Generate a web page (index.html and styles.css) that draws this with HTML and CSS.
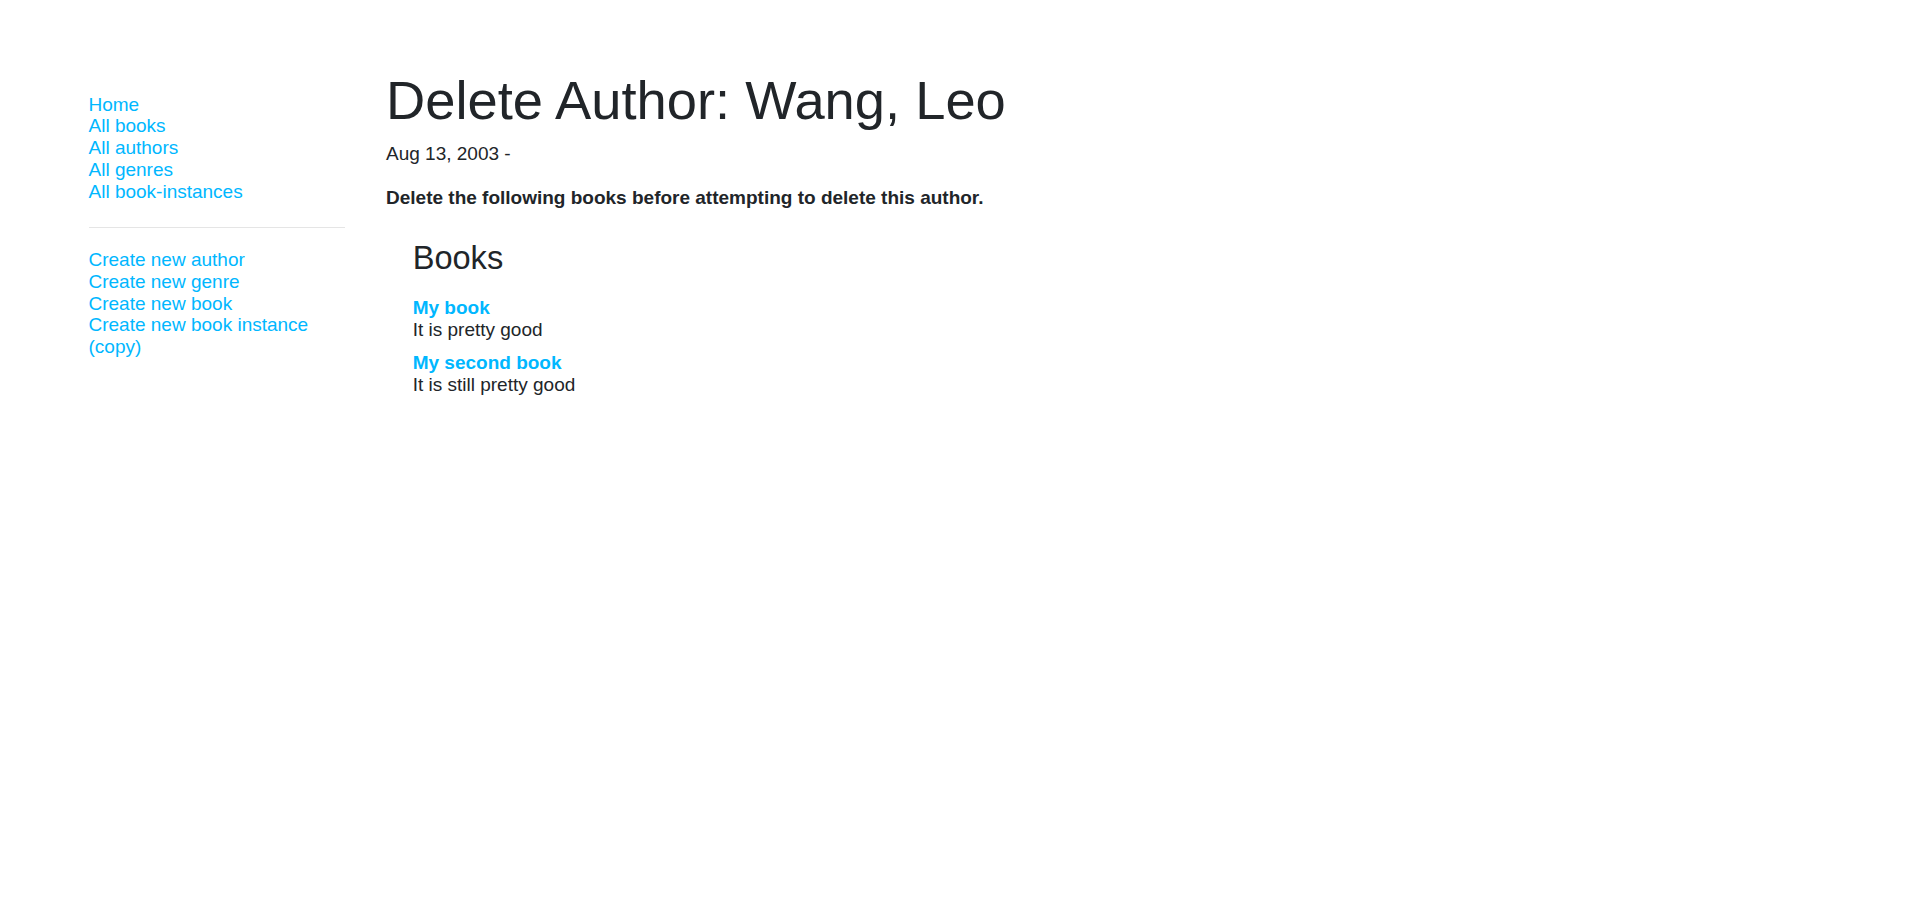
FILE: index.html
```html
<!DOCTYPE html>
<html lang="en">
<head>
<meta charset="utf-8">
<title>Delete Author</title>
<link rel="stylesheet" href="styles.css">
</head>
<body>
  <div class="layout">
    <div class="sidebar">
      <ul class="sidebar-nav">
        <li><a href="#">Home</a></li>
        <li><a href="#">All books</a></li>
        <li><a href="#">All authors</a></li>
        <li><a href="#">All genres</a></li>
        <li><a href="#">All book-instances</a></li>
      </ul>
      <hr class="divider">
      <ul class="sidebar-nav sidebar-nav-second">
        <li><a href="#">Create new author</a></li>
        <li><a href="#">Create new genre</a></li>
        <li><a href="#">Create new book</a></li>
        <li><a href="#">Create new book instance (copy)</a></li>
      </ul>
    </div>
    <div class="main">
      <h1 class="title">Delete Author: Wang, Leo</h1>
      <p class="dates">Aug 13, 2003 - </p>
      <p class="warning"><strong>Delete the following books before attempting to delete this author.</strong></p>
      <div class="books">
        <h4 class="books-title">Books</h4>
        <dl class="book-list">
          <dt class="book-name"><a href="#">My book</a></dt>
          <dd class="book-summary">It is pretty good</dd>
          <dt class="book-name"><a href="#">My second book</a></dt>
          <dd class="book-summary">It is still pretty good</dd>
        </dl>
      </div>
    </div>
  </div>
</body>
</html>
```
FILE: styles.css
```css
html, body {
  background: #ffffff;
}
body {
  margin: 0;
  padding: 67px 68px;
  font-family: "Liberation Sans", Arial, Helvetica, sans-serif;
  font-size: 19px;
  line-height: 21.8px;
  color: #212529;
}
a {
  color: #00B7FF;
  text-decoration: none;
}
.layout {
  display: flex;
}
.sidebar {
  flex: 0 0 16.6667%;
  max-width: 16.6667%;
  box-sizing: border-box;
  padding: 0 20.5px;
}
.main {
  flex: 0 0 83.3333%;
  max-width: 83.3333%;
  box-sizing: border-box;
  padding: 0 20.5px;
}
.sidebar-nav {
  margin: 26.67px 0 0;
  padding: 0;
  list-style: none;
}
.divider {
  margin: 24px 0 0;
  border: 0;
  border-top: 1px solid rgba(0, 0, 0, 0.1);
  height: 0;
}
.sidebar-nav-second {
  margin-top: 21.33px;
}
.title {
  font-size: 54.3px;
  font-weight: 500;
  line-height: 1.2;
  margin: 1px 0 10px;
}
.dates {
  margin: 0 0 22.5px;
}
.warning {
  margin: 0 0 21px;
}
.warning strong {
  font-weight: 700;
}
.books {
  margin: 28.5px 0 0 26.67px;
}
.books-title {
  font-size: 32.6px;
  font-weight: 500;
  line-height: 1.2;
  margin: 0 0 20.5px;
}
.book-list {
  margin: 0 0 21.33px;
}
.book-name {
  font-weight: 700;
}
.book-summary {
  margin: 0 0 11.5px;
}
```
